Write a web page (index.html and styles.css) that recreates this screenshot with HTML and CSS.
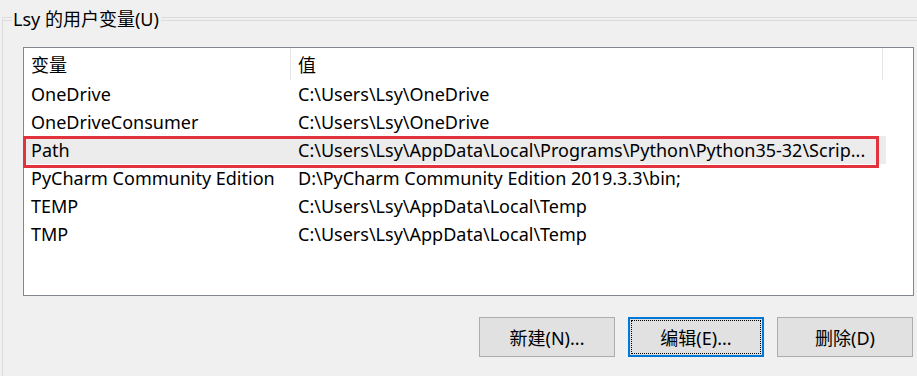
FILE: index.html
```html
<!DOCTYPE html>
<html lang="zh-CN">
<head>
    <meta charset="UTF-8">
    <meta name="viewport" content="width=device-width, initial-scale=1.0">
    <title>环境变量</title>
    <link rel="stylesheet" href="styles.css">
</head>
<body>
    <fieldset class="group">
        <legend>Lsy 的用户变量(U)</legend>

        <div class="listbox">
            <div class="row head">
                <div class="col name">变量</div>
                <div class="col value">值</div>
                <div class="col rest"></div>
            </div>
            <div class="row"><div class="col name">OneDrive</div><div class="col value">C:\Users\Lsy\OneDrive</div></div>
            <div class="row"><div class="col name">OneDriveConsumer</div><div class="col value">C:\Users\Lsy\OneDrive</div></div>
            <div class="row selected"><div class="col name">Path</div><div class="col value">C:\Users\Lsy\AppData\Local\Programs\Python\Python35-32\Scrip...</div></div>
            <div class="row"><div class="col name">PyCharm Community Edition</div><div class="col value">D:\PyCharm Community Edition 2019.3.3\bin;</div></div>
            <div class="row"><div class="col name">TEMP</div><div class="col value">C:\Users\Lsy\AppData\Local\Temp</div></div>
            <div class="row"><div class="col name">TMP</div><div class="col value">C:\Users\Lsy\AppData\Local\Temp</div></div>
            <div class="mark"></div>
        </div>

        <div class="buttons">
            <button>新建(N)...</button>
            <button class="focus">编辑(E)...</button>
            <button>删除(D)</button>
        </div>
    </fieldset>
</body>
</html>
```

FILE: styles.css
```css
html, body { margin: 0; padding: 0; background: #f0f0f0; }
body {
    font-family: "Noto Sans", "Noto Sans CJK SC", sans-serif;
    font-size: 18px;
    color: #000;
    height: 376px;
    overflow: hidden;
}

.group {
    margin: 7px 0 0 2px;
    padding: 2px 0 20px 20px;
    border: none;
    border-top: 4px double #dcdcdc;
    border-left: 1px solid #dcdcdc;
    width: 900px;
}
.group legend {
    margin-left: -11px;
    padding: 0 2px 0 1px;
    line-height: 24px;
}

.listbox {
    position: relative;
    width: 889px;
    height: 247px;
    margin-top: 14px;
    background: #fff;
    border: 1px solid #828790;
}

.row { display: flex; height: 28px; line-height: 28px; white-space: nowrap; }
.row .col { padding-left: 7px; overflow: hidden; }
.row .name { width: 260px; }
.row .value { width: 588px; }

.row.head { height: 32px; line-height: 34px; }
.row.head .col { border-right: 1px solid #e5e5e5; height: 32px; }
.row.head .name { width: 259px; }
.row.head .value { width: 584px; }
.row.head .rest { border-right: none; }

.row.selected .name, .row.selected .value { background: #ececec; }

.mark {
    position: absolute;
    left: -1px;
    top: 88px;
    width: 850px;
    height: 26px;
    border: 3px solid #e2323d;
}

.buttons {
    display: flex;
    justify-content: flex-end;
    gap: 13px;
    width: 890px;
    margin-top: 21px;
}
.buttons button {
    width: 136px;
    height: 40px;
    font-family: inherit;
    font-size: 18px;
    color: #000;
    background: #e1e1e1;
    border: 1px solid #adadad;
    padding: 0;
}
.buttons button.focus {
    border: 2px solid #0078d7;
    outline: 1px dotted #000;
    outline-offset: -4px;
}
```
